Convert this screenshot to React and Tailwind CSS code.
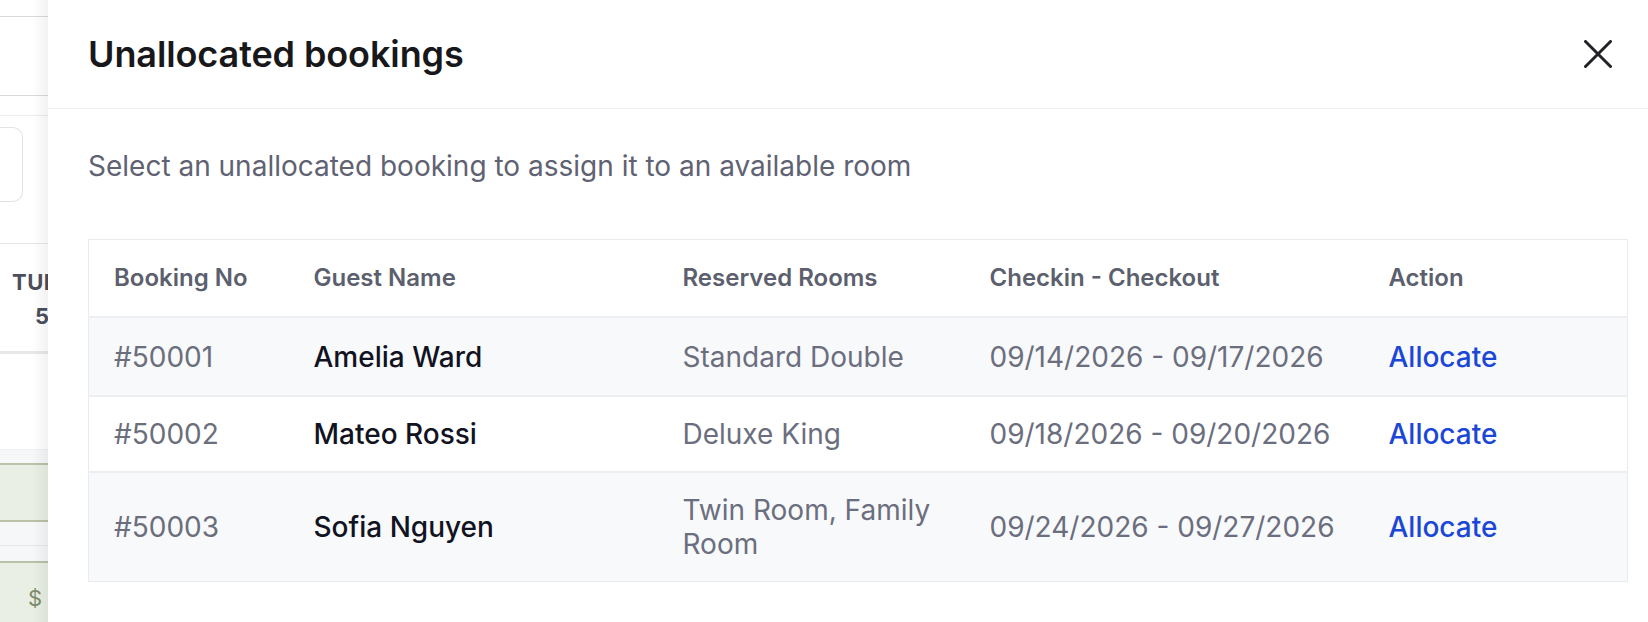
import React from "react";

const bookings = [
  { no: "#50001", guest: "Amelia Ward", rooms: "Standard Double", dates: "09/14/2026 - 09/17/2026" },
  { no: "#50002", guest: "Mateo Rossi", rooms: "Deluxe King", dates: "09/18/2026 - 09/20/2026" },
  { no: "#50003", guest: "Sofia Nguyen", rooms: "Twin Room, Family Room", dates: "09/24/2026 - 09/27/2026" },
];

const CloseIcon = () => (
  <svg width="28" height="28" viewBox="0 0 28 28" fill="none" stroke="currentColor" strokeWidth="3" strokeLinecap="round">
    <path d="M1.5 1.5 26.5 26.5" />
    <path d="M26.5 1.5 1.5 26.5" />
  </svg>
);

// calendar page peeking out behind the drawer
const BehindPage = () => (
  <div className="relative w-[48px] h-full shrink-0 bg-white overflow-hidden flex flex-col">
    <div className="h-[17px] shrink-0 border-b border-[#d9d9d9]" />
    <div className="h-[79px] shrink-0 border-b border-[#d9d9d9]" />
    <div className="h-[20px] shrink-0 border-b border-[#ececec]" />
    <div className="h-[128px] shrink-0 pt-[11px] border-b border-[#e5e5e5]">
      <div className="w-[23px] h-[75px] rounded-r-[10px] border border-l-0 border-[#e3e3e3]" />
    </div>
    <div className="h-[107px] shrink-0 flex flex-col items-start pl-[12px] pt-[21px] text-[22px] leading-[34px] font-bold text-[#4b4f5c] whitespace-nowrap">
      <span className="tracking-[0.5px]">TUE</span>
      <span className="pl-[23px]">5</span>
    </div>
    <div className="h-[3px] shrink-0 bg-[#e8e8e8]" />
    <div className="h-[96px] shrink-0 border-b border-[#eef0f2]" />
    <div className="h-[13px] shrink-0 bg-[#f6f7f9]" />
    <div className="h-[59px] shrink-0 bg-[#e9efe4] border-y-2 border-[#b9c1a6]" />
    <div className="h-[24px] shrink-0 bg-[#f6f7f9] border-b border-[#e6e8eb]" />
    <div className="h-[15px] shrink-0 bg-[#f6f7f9]" />
    <div className="flex-1 bg-[#e9efe4] border-t-2 border-[#b9c1a6] flex justify-end pr-[6px] pt-[20px] text-[22px] leading-[30px] text-[#7e8c6b]">
      $
    </div>
    <div className="absolute inset-y-0 right-0 w-[16px] bg-gradient-to-r from-transparent to-[rgba(0,0,0,0.05)]" />
  </div>
);

export default function App() {
  return (
    <div className="w-full h-[622px] flex overflow-hidden bg-white font-['Inter',sans-serif]">
      <BehindPage />
      <div className="flex-1 flex flex-col bg-white">
        <div className="h-[109px] shrink-0 flex items-center justify-between pl-10 pr-[36px] border-b border-[#f0f0f2]">
          <h1 className="text-[36px] leading-[44px] font-semibold text-[#18181b] tracking-[-0.1px]">Unallocated bookings</h1>
          <button className="text-[#222226]">
            <CloseIcon />
          </button>
        </div>
        <div className="pl-10 pr-[20px]">
          <p className="mt-[39px] text-[28px] leading-[36px] text-[#5f6272]">
            Select an unallocated booking to assign it to an available room
          </p>
          <table className="mt-[55px] w-[1540px] table-fixed border border-[#e9ebee] border-collapse">
            <colgroup>
              <col className="w-[200px]" />
              <col className="w-[369px]" />
              <col className="w-[307px]" />
              <col className="w-[399px]" />
              <col />
            </colgroup>
            <thead>
              <tr className="border-b-2 border-[#eceef1] bg-white">
                {["Booking No", "Guest Name", "Reserved Rooms", "Checkin - Checkout", "Action"].map((h) => (
                  <th key={h} className="px-[25px] py-[22px] text-left text-[24px] leading-[32px] font-semibold text-[#5c5f6e]">
                    {h}
                  </th>
                ))}
              </tr>
            </thead>
            <tbody className="[&_td]:px-[25px] [&_td]:py-[20px] [&_td]:text-[28px] [&_td]:leading-[34px] [&_tr:first-child_td]:py-[21.5px]">
              {bookings.map((b, i) => (
                <tr key={b.no} className={`border-b-2 border-[#eceef1] last:border-b-0 ${i % 2 === 0 ? "bg-[#f8f9fb]" : "bg-white"}`}>
                  <td className="text-[#6b6e7b]">{b.no}</td>
                  <td className="font-medium text-[#111322]">{b.guest}</td>
                  <td className="text-[#6b6e7e]">{b.rooms}</td>
                  <td className="text-[#6b6e7e]">{b.dates}</td>
                  <td className="font-medium text-[#1c47d6]">
                    <a href="#">Allocate</a>
                  </td>
                </tr>
              ))}
            </tbody>
          </table>
        </div>
      </div>
    </div>
  );
}
